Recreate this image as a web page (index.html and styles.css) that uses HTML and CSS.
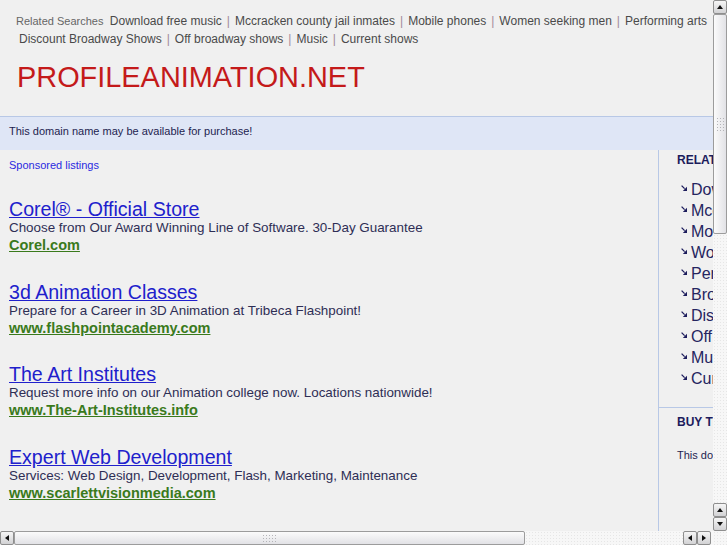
FILE: index.html
```html
<!DOCTYPE html>
<html>
<head>
<meta charset="utf-8">
<title>profileanimation.net</title>
<link rel="stylesheet" href="styles.css">
</head>
<body>
<div class="window">
  <div class="main">
    <div class="viewport">
      <div class="page">
        <div class="header">
          <div class="rs-line"><span class="rs-label">Related Searches</span> <a href="#">Download free music</a><span class="sep">|</span><a href="#">Mccracken county jail inmates</a><span class="sep">|</span><a href="#">Mobile phones</a><span class="sep">|</span><a href="#">Women seeking men</a><span class="sep">|</span><a href="#">Performing arts</a></div>
          <div class="rs-line rs-line2"><a href="#">Discount Broadway Shows</a><span class="sep">|</span><a href="#">Off broadway shows</a><span class="sep">|</span><a href="#">Music</a><span class="sep">|</span><a href="#">Current shows</a></div>
          <h1 class="domain">PROFILEANIMATION.NET</h1>
        </div>
        <div class="band">This domain name may be available for purchase!</div>
        <div class="columns">
          <div class="left">
            <a class="sponsored" href="#">Sponsored listings</a>
            <div class="ad">
              <a class="ad-title" href="#">Corel® - Official Store</a>
              <div class="ad-desc">Choose from Our Award Winning Line of Software. 30-Day Guarantee</div>
              <a class="ad-url" href="#">Corel.com</a>
            </div>
            <div class="ad">
              <a class="ad-title" href="#">3d Animation Classes</a>
              <div class="ad-desc">Prepare for a Career in 3D Animation at Tribeca Flashpoint!</div>
              <a class="ad-url" href="#">www.flashpointacademy.com</a>
            </div>
            <div class="ad">
              <a class="ad-title" href="#">The Art Institutes</a>
              <div class="ad-desc">Request more info on our Animation college now. Locations nationwide!</div>
              <a class="ad-url" href="#">www.The-Art-Institutes.info</a>
            </div>
            <div class="ad">
              <a class="ad-title" href="#">Expert Web Development</a>
              <div class="ad-desc">Services: Web Design, Development, Flash, Marketing, Maintenance</div>
              <a class="ad-url" href="#">www.scarlettvisionmedia.com</a>
            </div>
          </div>
          <div class="right">
            <div class="related">
              <div class="side-head">RELATED SEARCHES</div>
              <ul class="rel-list">
                <li><svg class="arr" viewBox="0 0 6 6" width="6" height="6"><path d="M0.6 0.6 L3.6 3.6" stroke="#1c1c5c" stroke-width="1.3"/><polygon points="6,1.8 6,6 1.8,6" fill="#1c1c5c"/></svg><a href="#">Download free music</a></li>
                <li><svg class="arr" viewBox="0 0 6 6" width="6" height="6"><path d="M0.6 0.6 L3.6 3.6" stroke="#1c1c5c" stroke-width="1.3"/><polygon points="6,1.8 6,6 1.8,6" fill="#1c1c5c"/></svg><a href="#">Mccracken county jail inmates</a></li>
                <li><svg class="arr" viewBox="0 0 6 6" width="6" height="6"><path d="M0.6 0.6 L3.6 3.6" stroke="#1c1c5c" stroke-width="1.3"/><polygon points="6,1.8 6,6 1.8,6" fill="#1c1c5c"/></svg><a href="#">Mobile phones</a></li>
                <li><svg class="arr" viewBox="0 0 6 6" width="6" height="6"><path d="M0.6 0.6 L3.6 3.6" stroke="#1c1c5c" stroke-width="1.3"/><polygon points="6,1.8 6,6 1.8,6" fill="#1c1c5c"/></svg><a href="#">Women seeking men</a></li>
                <li><svg class="arr" viewBox="0 0 6 6" width="6" height="6"><path d="M0.6 0.6 L3.6 3.6" stroke="#1c1c5c" stroke-width="1.3"/><polygon points="6,1.8 6,6 1.8,6" fill="#1c1c5c"/></svg><a href="#">Performing arts</a></li>
                <li><svg class="arr" viewBox="0 0 6 6" width="6" height="6"><path d="M0.6 0.6 L3.6 3.6" stroke="#1c1c5c" stroke-width="1.3"/><polygon points="6,1.8 6,6 1.8,6" fill="#1c1c5c"/></svg><a href="#">Broadway tickets</a></li>
                <li><svg class="arr" viewBox="0 0 6 6" width="6" height="6"><path d="M0.6 0.6 L3.6 3.6" stroke="#1c1c5c" stroke-width="1.3"/><polygon points="6,1.8 6,6 1.8,6" fill="#1c1c5c"/></svg><a href="#">Discount Broadway Shows</a></li>
                <li><svg class="arr" viewBox="0 0 6 6" width="6" height="6"><path d="M0.6 0.6 L3.6 3.6" stroke="#1c1c5c" stroke-width="1.3"/><polygon points="6,1.8 6,6 1.8,6" fill="#1c1c5c"/></svg><a href="#">Off broadway shows</a></li>
                <li><svg class="arr" viewBox="0 0 6 6" width="6" height="6"><path d="M0.6 0.6 L3.6 3.6" stroke="#1c1c5c" stroke-width="1.3"/><polygon points="6,1.8 6,6 1.8,6" fill="#1c1c5c"/></svg><a href="#">Music</a></li>
                <li><svg class="arr" viewBox="0 0 6 6" width="6" height="6"><path d="M0.6 0.6 L3.6 3.6" stroke="#1c1c5c" stroke-width="1.3"/><polygon points="6,1.8 6,6 1.8,6" fill="#1c1c5c"/></svg><a href="#">Current shows</a></li>
              </ul>
            </div>
            <div class="buy">
              <div class="side-head">BUY THIS DOMAIN</div>
              <p class="buy-text">This domain may be for sale by its owner!</p>
            </div>
          </div>
        </div>
      </div>
    </div>
    <div class="vscroll">
      <div class="sb-btn"><span class="tri-up"></span></div>
      <div class="vthumb"><span class="grip vgrip"></span></div>
      <div class="vtrack"></div>
      <div class="sb-btn"><span class="tri-up"></span></div>
      <div class="sb-btn"><span class="tri-down"></span></div>
    </div>
  </div>
  <div class="hscroll">
    <div class="sb-btn"><span class="tri-left"></span></div>
    <div class="hthumb"><span class="grip hgrip"></span></div>
    <div class="htrack"></div>
    <div class="sb-btn"><span class="tri-left"></span></div>
    <div class="sb-btn"><span class="tri-right"></span></div>
    <div class="hgap"></div>
    <div class="corner"></div>
  </div>
</div>
</body>
</html>
```

FILE: styles.css
```css
html, body {
  margin: 0;
  padding: 0;
  overflow: hidden;
  background: #f0f0f0;
  font-family: "Liberation Sans", Arial, sans-serif;
}

.window {
  width: 727px;
  height: 545px;
  display: flex;
  flex-direction: column;
}

.main {
  height: 531px;
  display: flex;
  flex: none;
}

.viewport {
  width: 713px;
  height: 531px;
  overflow: hidden;
  flex: none;
}

.page {
  width: 910px;
  height: 531px;
  display: flex;
  flex-direction: column;
  background: #f0f0f0;
}

/* header */
.header {
  padding: 12px 0 0 16px;
}

.rs-line {
  font-size: 12px;
  line-height: 18px;
  white-space: nowrap;
  color: #555;
}

.rs-line2 {
  padding-left: 3px;
}

.rs-label {
  font-size: 11px;
  color: #666;
  margin-right: 3px;
}

.rs-line a {
  color: #4a4a4a;
  text-decoration: none;
}

.sep {
  color: #a08a9a;
  margin: 0 5px;
}

.domain {
  margin: 12px 0 0 1px;
  font-size: 28.9px;
  line-height: 34px;
  font-weight: normal;
  color: #c41a1a;
}

.band {
  margin-top: 22px;
  border-top: 1px solid #b8c8e6;
  background: #dfe6f6;
  padding: 7px 9px 11px;
  font-size: 11px;
  line-height: 15px;
  color: #1e1e50;
}

/* columns */
.columns {
  flex: 1;
  display: flex;
}

.left {
  width: 659px;
  flex: none;
  box-sizing: border-box;
  border-right: 1px solid #b8c8e6;
  padding: 8px 0 0 9px;
}

.sponsored {
  display: block;
  width: max-content;
  font-size: 11px;
  line-height: 14px;
  color: #2a2ae0;
  text-decoration: none;
  margin-bottom: 28px;
}

.ad {
  margin-bottom: 28.5px;
}

.ad-title {
  display: block;
  width: max-content;
  font-size: 19.6px;
  line-height: 19px;
  color: #2020cc;
  text-decoration: underline;
}

.ad-desc {
  font-size: 13.4px;
  line-height: 18px;
  color: #2e2e55;
}

.ad-url {
  display: block;
  width: max-content;
  font-size: 14.5px;
  line-height: 17px;
  font-weight: bold;
  color: #3a7a1c;
  text-decoration: underline;
}

.right {
  flex: 1;
  display: flex;
  flex-direction: column;
}

.related {
  padding: 3px 0 18px 18px;
  border-bottom: 1px solid #b8c8e6;
}

.side-head {
  font-size: 12px;
  line-height: 15px;
  font-weight: bold;
  color: #1c1c5c;
  white-space: nowrap;
}

.rel-list {
  list-style: none;
  margin: 11px 0 0 0;
  padding: 0 0 0 4px;
}

.rel-list li {
  display: flex;
  align-items: flex-start;
  font-size: 16px;
  line-height: 21px;
  white-space: nowrap;
}

.arr {
  flex: none;
  margin: 6px 4px 0 0;
}

.rel-list a {
  color: #252560;
  text-decoration: none;
}

.buy {
  padding: 7px 0 0 18px;
}

.buy-text {
  margin: 18px 0 0 0;
  font-size: 11px;
  line-height: 14px;
  color: #1e1e50;
  white-space: nowrap;
}

/* scrollbars */
.vscroll {
  width: 14px;
  height: 531px;
  display: flex;
  flex-direction: column;
  flex: none;
}

.sb-btn {
  width: 14px;
  height: 14px;
  box-sizing: border-box;
  flex: none;
  border: 1px solid #8e8e8e;
  border-radius: 2px;
  background: linear-gradient(#f6f6f6, #d2d2d4);
  display: flex;
  align-items: center;
  justify-content: center;
}

.tri-up {
  width: 0;
  height: 0;
  border-left: 3px solid transparent;
  border-right: 3px solid transparent;
  border-bottom: 4px solid #111;
}

.tri-down {
  width: 0;
  height: 0;
  border-left: 3px solid transparent;
  border-right: 3px solid transparent;
  border-top: 4px solid #111;
}

.tri-left {
  width: 0;
  height: 0;
  border-top: 3px solid transparent;
  border-bottom: 3px solid transparent;
  border-right: 4px solid #111;
}

.tri-right {
  width: 0;
  height: 0;
  border-top: 3px solid transparent;
  border-bottom: 3px solid transparent;
  border-left: 4px solid #111;
}

.vthumb {
  height: 220px;
  flex: none;
  box-sizing: border-box;
  border: 1px solid #9c9c9c;
  border-radius: 2px;
  background: linear-gradient(to right, #fbfbfb, #e2e2e6);
  display: flex;
  align-items: center;
  justify-content: center;
}

.grip {
  display: block;
  background-image: radial-gradient(circle, #b4b4b8 0.8px, transparent 1px);
  background-size: 3px 3px;
}

.vgrip {
  width: 9px;
  height: 15px;
}

.hgrip {
  width: 15px;
  height: 9px;
}

.vtrack, .htrack, .corner {
  background-color: #f7f7f7;
  background-image: radial-gradient(circle, #e6e6e6 0.5px, transparent 0.7px);
  background-size: 3px 3px;
}

.vtrack {
  flex: 1;
}

.hscroll {
  height: 14px;
  display: flex;
  flex: none;
}

.hthumb {
  width: 511px;
  flex: none;
  box-sizing: border-box;
  border: 1px solid #9c9c9c;
  border-radius: 2px;
  background: linear-gradient(#fbfbfb, #e2e2e6);
  display: flex;
  align-items: center;
  justify-content: center;
}

.htrack {
  flex: 1;
}

.hgap {
  width: 2px;
  flex: none;
  background: #f7f7f7;
}

.corner {
  width: 14px;
  flex: none;
}
```
